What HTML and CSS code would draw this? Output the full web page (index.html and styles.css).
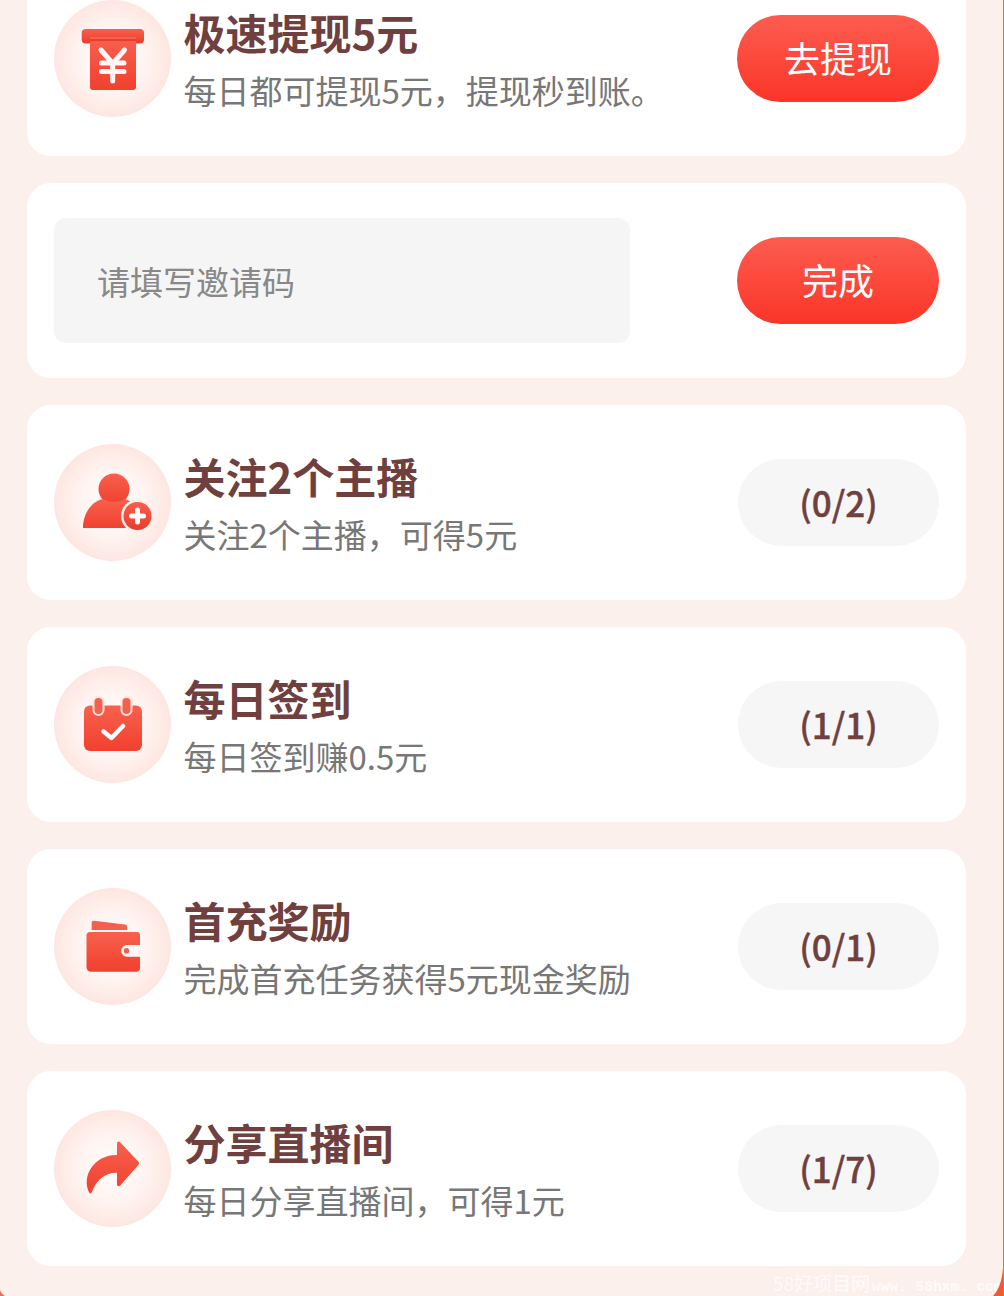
FILE: index.html
```html
<!DOCTYPE html>
<html lang="zh">
<head>
<meta charset="utf-8">
<title>任务</title>
<link rel="stylesheet" href="styles.css">
</head>
<body>
<svg class="defs" width="0" height="0" aria-hidden="true">
  <defs>
    <linearGradient id="red" x1="0" y1="0" x2="0" y2="1">
      <stop offset="0" stop-color="#f9604e"/>
      <stop offset="1" stop-color="#f1402e"/>
    </linearGradient>
    <linearGradient id="deep" x1="0" y1="0" x2="0" y2="1">
      <stop offset="0" stop-color="#f8604c"/>
      <stop offset="1" stop-color="#e83c2c"/>
    </linearGradient>
  </defs>
</svg>
<main class="list">
  <section class="card">
    <div class="icon">
      <svg viewBox="0 0 117 117" width="117" height="117">
        <rect x="27.700" y="29" width="62.300" height="14.500" rx="4" fill="url(#deep)"/>
        <path d="M36 37h46v50a3 3 0 0 1-3 3H39a3 3 0 0 1-3-3z" fill="url(#red)"/>
        <path d="M36 40h46" stroke="#d9382a" stroke-width="1.500"/>
        <path d="M47 50l11.700 13.500L70.500 50M47.500 63h22.500M47.500 71.500h22.500M58.700 63v18" fill="none" stroke="#fff" stroke-width="5" stroke-linecap="round" stroke-linejoin="round" opacity=".95"/>
      </svg>
    </div>
    <div class="text">
      <h2 class="title">极速提现5元</h2>
      <p class="sub">每日都可提现5元，提现秒到账。</p>
    </div>
    <button class="btn">去提现</button>
  </section>

  <section class="card card-input">
    <div class="field">请填写邀请码</div>
    <button class="btn">完成</button>
  </section>

  <section class="card">
    <div class="icon">
      <svg viewBox="0 0 117 117" width="117" height="117">
        <circle cx="60" cy="45" r="15.500" fill="url(#red)"/>
        <path d="M29 84c0-15 9-27 20-29 7 4 15 4 22 0 6 2 11 6 14 12v17z" fill="url(#red)"/>
        <circle cx="83.500" cy="72" r="16.500" fill="#fff0ec"/>
        <circle cx="83.500" cy="72" r="14" fill="url(#deep)"/>
        <path d="M83.500 66v12M77.500 72h12" stroke="#fff" stroke-width="5" stroke-linecap="round"/>
      </svg>
    </div>
    <div class="text">
      <h2 class="title">关注2个主播</h2>
      <p class="sub">关注2个主播，可得5元</p>
    </div>
    <div class="pill">(0/2)</div>
  </section>

  <section class="card">
    <div class="icon">
      <svg viewBox="0 0 117 117" width="117" height="117">
        <rect x="30" y="39.500" width="58" height="45.500" rx="6" fill="url(#red)"/>
        <rect x="39.500" y="31" width="10" height="18" rx="5" fill="#f4604f" stroke="#ffe4de" stroke-width="2"/>
        <rect x="67.500" y="31" width="10" height="18" rx="5" fill="#f4604f" stroke="#ffe4de" stroke-width="2"/>
        <path d="M49.500 65.500l8 6.500 11.500-12" fill="none" stroke="#fff" stroke-width="4.500" stroke-linecap="round" stroke-linejoin="round"/>
      </svg>
    </div>
    <div class="text">
      <h2 class="title">每日签到</h2>
      <p class="sub">每日签到赚0.5元</p>
    </div>
    <div class="pill">(1/1)</div>
  </section>

  <section class="card">
    <div class="icon">
      <svg viewBox="0 0 117 117" width="117" height="117">
        <path d="M37.700 34.500c0-1.200 1-2 2.200-1.800l31 3.800c1.300.2 2.300 1.200 2.300 2.500V42H37.700z" fill="#f4604f"/>
        <path d="M36 44h47a3 3 0 0 1 3 3v10H73a5.800 5.800 0 0 0 0 11.700h13V80a3.500 3.500 0 0 1-3.500 3.700H37a4.500 4.500 0 0 1-4.500-4.500V47.500A3.500 3.500 0 0 1 36 44z" fill="url(#red)"/>
        <circle cx="72.500" cy="62.800" r="2.800" fill="#f4604f"/>
      </svg>
    </div>
    <div class="text">
      <h2 class="title">首充奖励</h2>
      <p class="sub">完成首充任务获得5元现金奖励</p>
    </div>
    <div class="pill">(0/1)</div>
  </section>

  <section class="card">
    <div class="icon">
      <svg viewBox="0 0 117 117" width="117" height="117">
        <path d="M63 33.500c0-2 1.800-2.600 3.200-1.300L84.200 51.500c1.200 1.200 1.200 2.600 0 3.800L66.200 75.500c-1.400 1.500-3.200.8-3.200-1.200V62.800C52 62.500 43 69 37.800 82c-.8 1.800-2 1.800-2.800.2-3.500-7.500-3.200-16 2-24 6-9 15.500-13.500 26-13.200z" fill="url(#red)"/>
      </svg>
    </div>
    <div class="text">
      <h2 class="title">分享直播间</h2>
      <p class="sub">每日分享直播间，可得1元</p>
    </div>
    <div class="pill">(1/7)</div>
  </section>
</main>
<div class="watermark">58好项目网<span class="wm-latin">www. 58hxm. com</span></div>
<svg class="corner corner-right" viewBox="0 0 12 28" width="12" height="28" aria-hidden="true">
  <path d="M12 0v28H1C6 23 10 14 11 0z" fill="#ef5a35"/>
</svg>
<svg class="corner corner-left" viewBox="0 0 5 6" width="5" height="6" aria-hidden="true">
  <path d="M0 0v6h5C3 5 1 3 0 0z" fill="#e8705a"/>
</svg>
<div class="edge"></div>
</body>
</html>
```

FILE: styles.css
```css
* { box-sizing: border-box; }
html, body { margin: 0; height: 1296px; overflow: hidden; }
body {
  position: relative;
  background: #fcf0ec;
  font-family: "Noto Sans CJK SC", "Noto Sans", sans-serif;
}
.defs { position: absolute; }
.list {
  display: flex;
  flex-direction: column;
  gap: 27px;
  width: 939px;
  margin: -39px 0 0 27px;
}
.card {
  display: flex;
  align-items: center;
  height: 195px;
  padding: 0 27px;
  background: #fff;
  border-radius: 24px;
}
.icon {
  flex: none;
  width: 117px;
  height: 117px;
  margin-right: 12.500px;
  border-radius: 50%;
  background: radial-gradient(circle at center, #fffdfc 0%, #fff4f1 40%, #fcd9d1 100%);
}
.icon svg { display: block; }
.text { flex: 1; min-width: 0; padding-top: 4px; }
.title {
  margin: 0;
  font-size: 42px;
  line-height: 56px;
  font-weight: 700;
  color: #70403e;
}
.sub {
  margin: 2px 0 0;
  font-size: 33px;
  line-height: 56px;
  color: #777;
}
.btn {
  flex: none;
  width: 202px;
  height: 87px;
  padding: 0 0 3px;
  border: 0;
  border-radius: 44px;
  background: linear-gradient(#fd5c50, #fb3528);
  color: #fff;
  font: 400 36px "Noto Sans CJK SC", sans-serif;
}
.pill {
  flex: none;
  width: 201px;
  height: 87px;
  border-radius: 44px;
  background: #f6f6f6;
  color: #70403e;
  font-size: 35px;
  font-weight: 500;
  line-height: 85px;
  text-align: center;
  -webkit-text-stroke: .4px #70403e;
}
.card-input { justify-content: space-between; }
.field {
  width: 576px;
  height: 125px;
  padding-left: 43px;
  border-radius: 12px;
  background: #f5f5f5;
  color: #888;
  font-size: 33px;
  line-height: 126px;
}
.watermark {
  position: absolute;
  left: 773px;
  top: 1269px;
  font-size: 19px;
  line-height: 27px;
  white-space: nowrap;
  color: rgba(255, 255, 255, .75);
}
.wm-latin {
  margin-left: 2px;
  font-family: "Liberation Mono", monospace;
  font-size: 14.500px;
  font-weight: 700;
}
.corner { position: absolute; display: block; }
.corner-right { right: 0; bottom: 0; }
.corner-left { left: 0; bottom: 0; }
.edge {
  position: absolute;
  top: 0;
  right: 0;
  width: 1px;
  height: 100%;
  background: #ea6a50;
}
```
